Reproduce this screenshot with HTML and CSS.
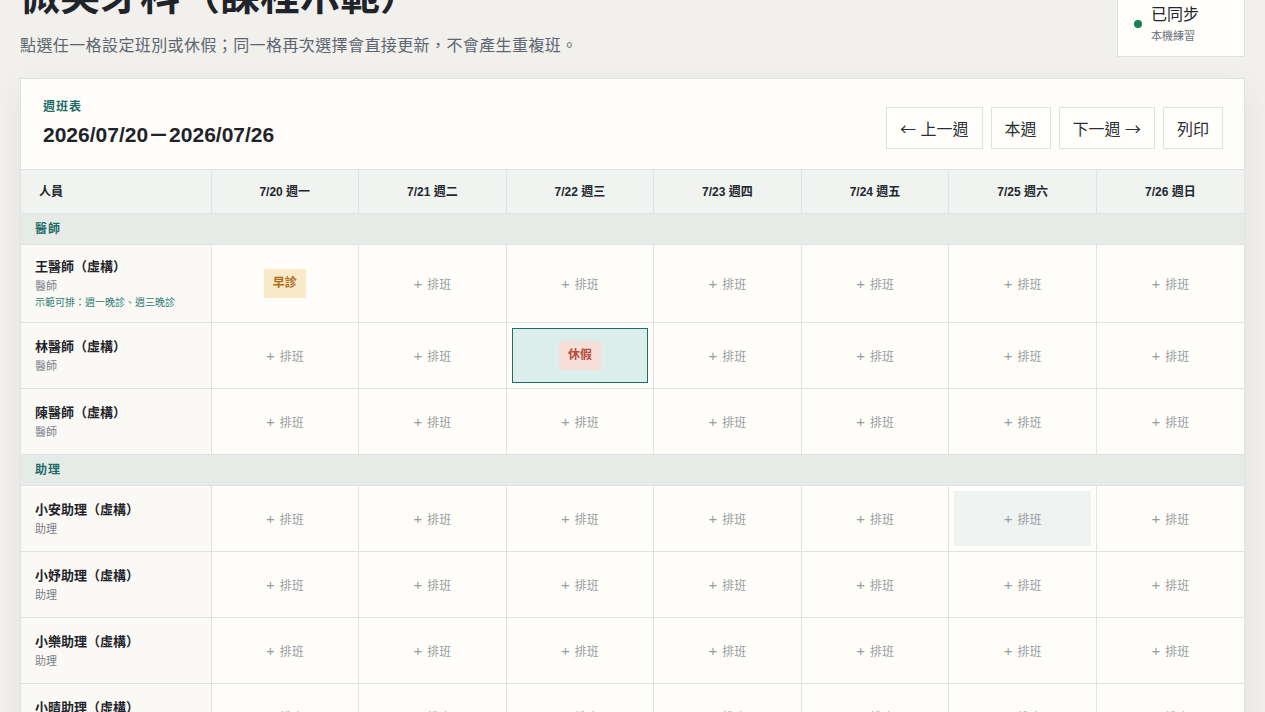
FILE: index.html
```html
<!DOCTYPE html>
<html lang="zh-Hant">
<head>
    <meta charset="UTF-8">
    <meta name="viewport" content="width=device-width, initial-scale=1.0">
    <title>微笑牙科（課程示範）</title>
    <link rel="stylesheet" href="styles.css">
</head>
<body>
    <div class="page">
        <!-- Page heading + sync status -->
        <header class="page-head">
            <div>
                <h1>微笑牙科（課程示範）</h1>
                <p class="lead">點選任一格設定班別或休假；同一格再次選擇會直接更新，不會產生重複班。</p>
            </div>
            <div class="sync-card">
                <span class="sync-dot"></span>
                <div>
                    <div class="sync-title">已同步</div>
                    <div class="sync-sub">本機練習</div>
                </div>
            </div>
        </header>

        <!-- Weekly roster -->
        <section class="roster">
            <div class="roster-head">
                <div>
                    <div class="roster-label">週班表</div>
                    <div class="roster-range">2026/07/20－2026/07/26</div>
                </div>
                <div class="roster-actions">
                    <button class="btn"><span class="arrow">←</span> 上一週</button>
                    <button class="btn">本週</button>
                    <button class="btn">下一週 <span class="arrow">→</span></button>
                    <button class="btn">列印</button>
                </div>
            </div>

            <table class="grid">
                <colgroup>
                    <col class="col-staff">
                    <col><col><col><col><col><col><col>
                </colgroup>
                <thead>
                    <tr>
                        <th class="th-staff">人員</th>
                        <th>7/20 週一</th>
                        <th>7/21 週二</th>
                        <th>7/22 週三</th>
                        <th>7/23 週四</th>
                        <th>7/24 週五</th>
                        <th>7/25 週六</th>
                        <th>7/26 週日</th>
                    </tr>
                </thead>
                <tbody id="roster-body"></tbody>
            </table>
        </section>
    </div>

    <script src="script.js"></script>
</body>
</html>
```

FILE: styles.css
```css
* {
    box-sizing: border-box;
}

body {
    margin: 0;
    background: #f1f0ec;
    color: #21262d;
    font-family: "Liberation Sans", "Noto Sans CJK TC", sans-serif;
}

.page {
    padding: 32px 20px 40px;
}

/* heading */
.page-head {
    display: flex;
    justify-content: space-between;
    align-items: flex-end;
    margin-bottom: 19px;
}

h1 {
    margin: 0 0 10px;
    font-size: 40px;
    line-height: 54px;
    font-weight: 700;
    color: #1f242b;
}

.lead {
    margin: 0;
    font-size: 16px;
    line-height: 26px;
    letter-spacing: 0.4px;
    color: #5d6570;
}

.sync-card {
    display: flex;
    align-items: center;
    gap: 9px;
    min-width: 128px;
    margin-bottom: 2px;
    padding: 12px 16px;
    background: #fffefa;
    border: 1px solid #dde2e7;
}

.sync-dot {
    width: 8px;
    height: 8px;
    border-radius: 50%;
    background: #14825a;
}

.sync-title {
    font-size: 16px;
    line-height: 22px;
    color: #22272e;
}

.sync-sub {
    margin-top: 2px;
    font-size: 11px;
    line-height: 16px;
    color: #6a717b;
}

/* roster card */
.roster {
    background: #fffdf9;
    border: 1px solid #dde2e7;
    box-shadow: 0 10px 30px rgba(60, 60, 40, 0.07);
}

.roster-head {
    display: flex;
    justify-content: space-between;
    align-items: flex-end;
    padding: 20px 21px 20px 22px;
    border-bottom: 1px solid #dde2e7;
}

.roster-label {
    font-size: 12px;
    line-height: 16px;
    font-weight: 700;
    letter-spacing: 1px;
    color: #1d6b66;
}

.roster-range {
    margin-top: 6px;
    font-size: 21px;
    line-height: 28px;
    font-weight: 700;
    color: #1f242b;
}

.roster-actions {
    display: flex;
    gap: 8px;
}

.btn {
    height: 42px;
    padding: 0 13px;
    background: #fffefb;
    border: 1px solid #dde2e7;
    font-family: inherit;
    font-size: 16px;
    color: #2a2f36;
    cursor: pointer;
}

.arrow {
    font-family: "Noto Sans CJK TC", sans-serif;
}

/* table */
.grid {
    width: 100%;
    table-layout: fixed;
    border-collapse: collapse;
}

.col-staff {
    width: 190px;
}

.grid th,
.grid td {
    border-right: 1px solid #dfe3e8;
    border-bottom: 1px solid #dfe3e8;
}

.grid th:last-child,
.grid td:last-child {
    border-right: none;
}

.grid th {
    padding: 14px 8px 13px;
    background: #f1f3f1;
    font-size: 12px;
    line-height: 16px;
    font-weight: 700;
    color: #22272e;
}

.grid .th-staff {
    padding-left: 18px;
    text-align: left;
}

.group-row td {
    padding: 7px 14px;
    background: #e6ebe8;
    font-size: 12px;
    line-height: 16px;
    font-weight: 700;
    letter-spacing: 1px;
    color: #1d6b66;
}

.staff {
    padding: 13px 14px 12px;
    background: #faf9f5;
    vertical-align: middle;
}

.staff-name {
    font-size: 13px;
    line-height: 18px;
    font-weight: 700;
    color: #1f242b;
}

.staff-role {
    margin-top: 2px;
    font-size: 11px;
    line-height: 16px;
    color: #7a8089;
}

.staff-note {
    margin-top: 2px;
    font-size: 10px;
    line-height: 14px;
    color: #2a7a72;
}

.slot {
    padding: 5px;
    vertical-align: middle;
}

.slot-btn {
    display: flex;
    align-items: center;
    justify-content: center;
    width: 100%;
    min-height: 55px;
    padding: 0;
    background: transparent;
    border: 1px solid transparent;
    font-family: inherit;
    font-size: 12px;
    color: #979da2;
    cursor: pointer;
}

.plus {
    margin-right: 5px;
    font-size: 15px;
    font-weight: 300;
}

.slot-btn:hover,
.slot-btn.is-hover {
    background: #eff3f2;
}

.slot-btn.is-selected {
    background: #dbeeeb;
    border-color: #1e6b65;
}

.badge {
    padding: 6px 9px;
    font-size: 12px;
    line-height: 17px;
    font-weight: 700;
}

.badge-morning {
    background: #f8e9c8;
    color: #b06a1a;
}

.badge-off {
    background: #f6dfd8;
    color: #b94b3b;
}
```

FILE: script.js
```js
// roster data: group -> staff rows, shifts keyed by day index
const groups = [
    {
        name: '醫師',
        staff: [
            { name: '王醫師（虛構）', role: '醫師', note: '示範可排：週一晚診、週三晚診', shifts: { 0: 'morning' } },
            { name: '林醫師（虛構）', role: '醫師', shifts: { 2: 'off' }, selected: 2 },
            { name: '陳醫師（虛構）', role: '醫師', shifts: {} }
        ]
    },
    {
        name: '助理',
        staff: [
            { name: '小安助理（虛構）', role: '助理', shifts: {}, hover: 5 },
            { name: '小妤助理（虛構）', role: '助理', shifts: {} },
            { name: '小樂助理（虛構）', role: '助理', shifts: {} },
            { name: '小晴助理（虛構）', role: '助理', shifts: {} }
        ]
    },
    {
        name: '櫃台',
        staff: [
            { name: '小芸櫃台（虛構）', role: '櫃台', shifts: {} },
            { name: '小涵櫃台（虛構）', role: '櫃台', shifts: {} }
        ]
    }
];

const labels = {
    morning: '<span class="badge badge-morning">早診</span>',
    off: '<span class="badge badge-off">休假</span>'
};

function renderRoster() {
    let html = '';
    groups.forEach(group => {
        html += `<tr class="group-row"><td colspan="8">${group.name}</td></tr>`;
        group.staff.forEach(person => {
            html += '<tr>';
            html += `<td class="staff"><div class="staff-name">${person.name}</div>`;
            html += `<div class="staff-role">${person.role}</div>`;
            if (person.note) {
                html += `<div class="staff-note">${person.note}</div>`;
            }
            html += '</td>';
            for (let d = 0; d < 7; d++) {
                let cls = 'slot-btn';
                if (person.selected === d) cls += ' is-selected';
                if (person.hover === d) cls += ' is-hover';
                const shift = person.shifts[d];
                const inner = shift ? labels[shift] : '<span class="plus">+</span>排班';
                html += `<td class="slot"><button class="${cls}">${inner}</button></td>`;
            }
            html += '</tr>';
        });
    });
    document.getElementById('roster-body').innerHTML = html;
}

renderRoster();
window.scrollTo(0, 63);
```
